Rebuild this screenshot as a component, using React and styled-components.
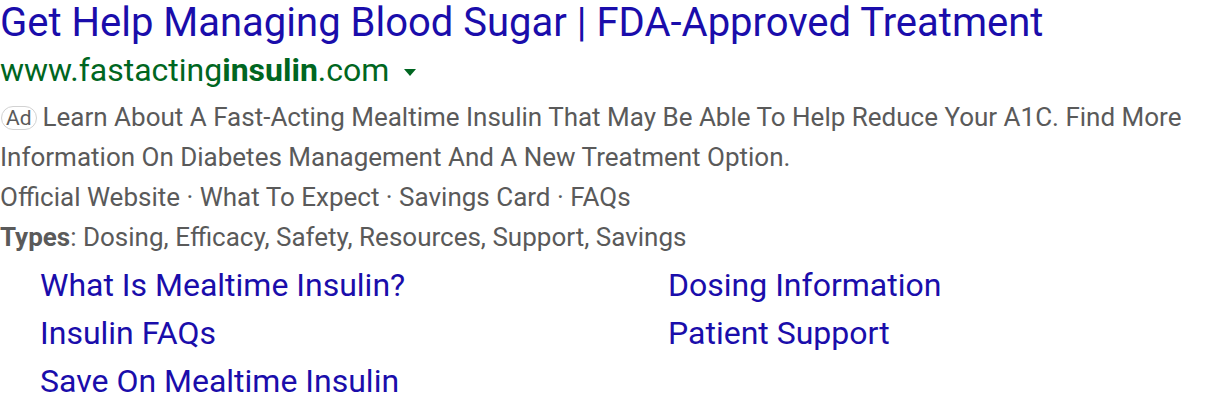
import React from "react";
import styled, {createGlobalStyle} from "styled-components";

const GlobalStyle = createGlobalStyle`
  html, body {
    margin: 0;
    padding: 0;
    background: #fff;
  }
  body {
    font-family: Roboto, "Liberation Sans", Arial, sans-serif;
  }
`;

const AdCard = styled.div`
  width: 1216px;
  height: 410px;
  overflow: hidden;
`;

const Title = styled.a`
  display: block;
  color: #1a0dab;
  font-size: 40px;
  line-height: 46px;
  text-decoration: none;
  white-space: nowrap;
`;

const UrlRow = styled.div`
  display: flex;
  align-items: center;
  color: #006621;
  font-size: 32px;
  line-height: 48px;
  white-space: nowrap;
  b {
    font-weight: 700;
  }
`;

const Caret = styled.span`
  display: inline-block;
  margin-left: 15px;
  margin-top: 4px;
  width: 0;
  height: 0;
  border-left: 6.5px solid transparent;
  border-right: 6.5px solid transparent;
  border-top: 7px solid #006621;
`;

const Desc = styled.div`
  color: #5a5a5a;
  font-size: 26px;
  line-height: 40px;
  margin-top: 3px;
`;

const AdBadge = styled.span`
  display: inline-block;
  box-sizing: border-box;
  height: 24px;
  border: 1px solid #d2d2d2;
  border-radius: 12px;
  font-size: 21px;
  line-height: 22px;
  padding: 0 4px;
  margin: 0 6px 0 1px;
  color: #5a5a5a;
  vertical-align: 1px;
`;

const Line = styled.div`
  color: #5a5a5a;
  font-size: 26px;
  line-height: 40px;
  white-space: nowrap;
  strong {
    font-weight: 700;
  }
`;

const Sitelinks = styled.div`
  display: grid;
  grid-template-columns: 628px 1fr;
  padding-left: 40px;
  margin-top: 4px;
`;

const Sitelink = styled.a`
  color: #1a0dab;
  font-size: 32px;
  line-height: 48px;
  text-decoration: none;
  white-space: nowrap;
`;

const links = [
  "What Is Mealtime Insulin?",
  "Dosing Information",
  "Insulin FAQs",
  "Patient Support",
  "Save On Mealtime Insulin",
];

export default function App() {
  return (
    <AdCard>
      <GlobalStyle />
      <Title href="#">Get Help Managing Blood Sugar | FDA-Approved Treatment</Title>
      <UrlRow>
        <span>
          www.fastacting<b>insulin</b>.com
        </span>
        <Caret />
      </UrlRow>
      <Desc>
        <AdBadge>Ad</AdBadge>Learn About A Fast-Acting Mealtime Insulin That May Be Able To Help
        Reduce Your A1C. Find More Information On Diabetes Management And A New Treatment Option.
      </Desc>
      <Line>Official Website · What To Expect · Savings Card · FAQs</Line>
      <Line>
        <strong>Types</strong>: Dosing, Efficacy, Safety, Resources, Support, Savings
      </Line>
      <Sitelinks>
        {links.map((l) => (
          <Sitelink key={l} href="#">
            {l}
          </Sitelink>
        ))}
      </Sitelinks>
    </AdCard>
  );
}
